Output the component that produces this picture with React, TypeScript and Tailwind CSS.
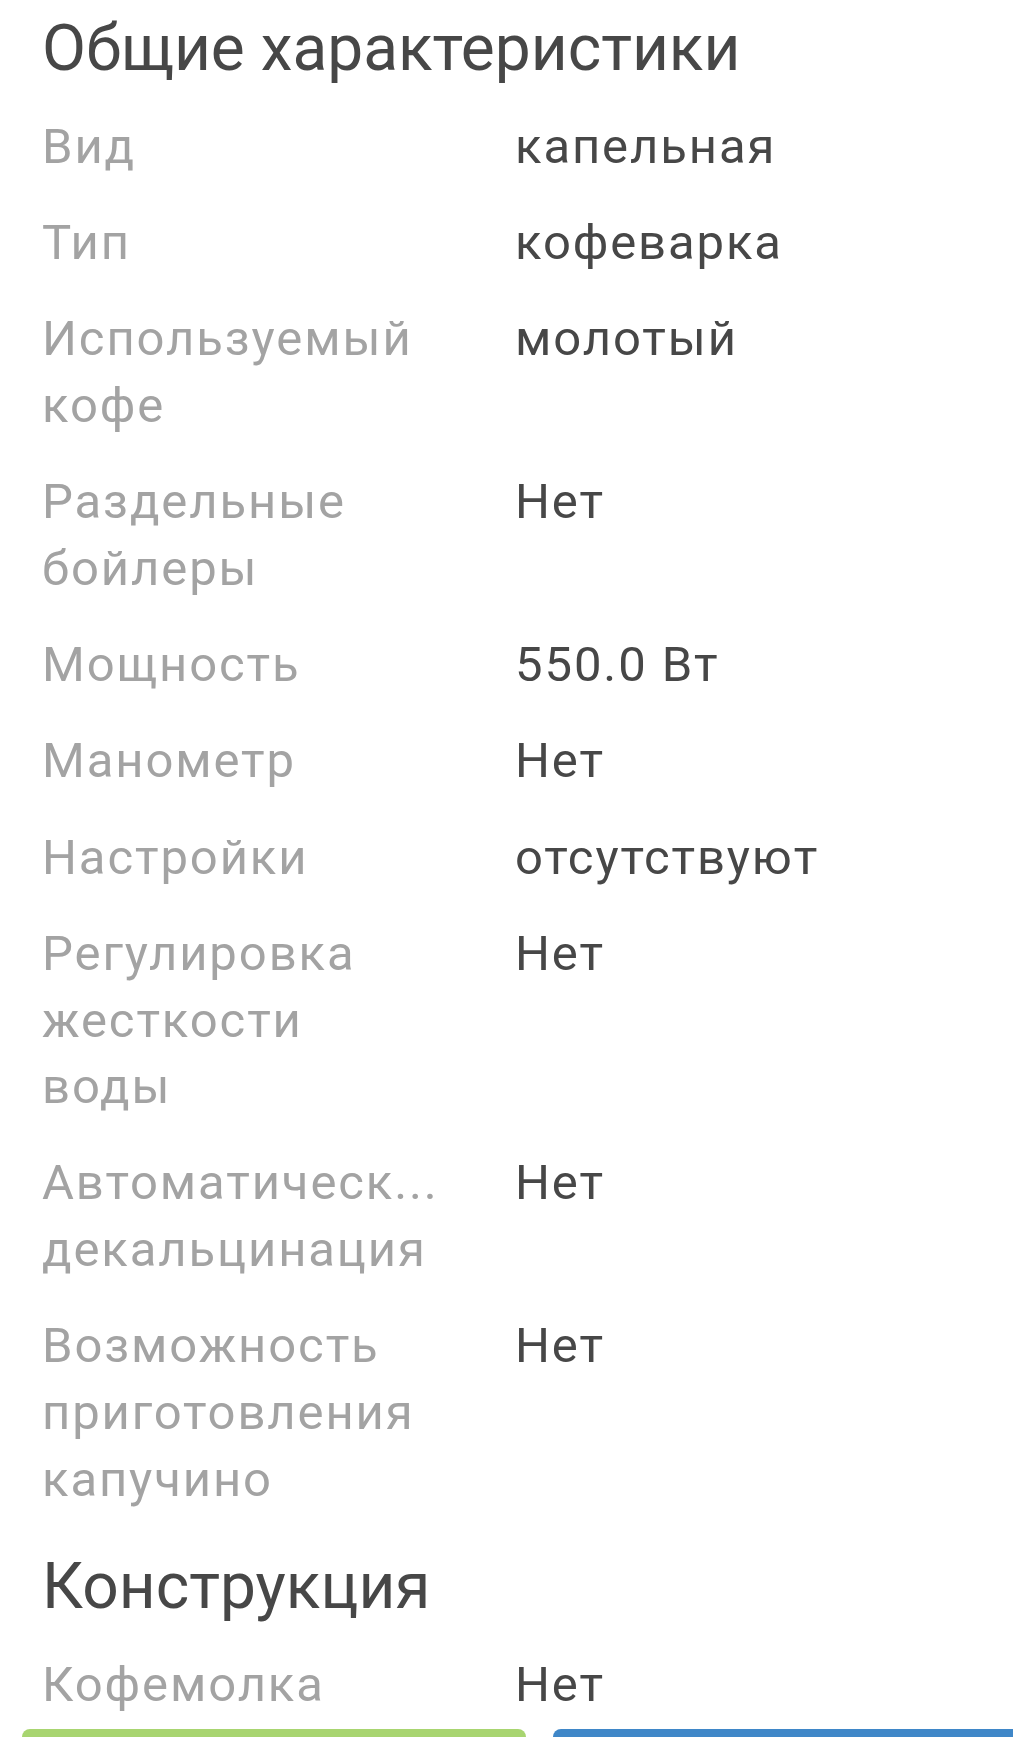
import React from 'react';

interface Spec {
  label: string[];
  value: string;
}

// labels are kept as the lines they wrap to on the device
const general: Spec[] = [
  { label: ['Вид'], value: 'капельная' },
  { label: ['Тип'], value: 'кофеварка' },
  { label: ['Используемый', 'кофе'], value: 'молотый' },
  { label: ['Раздельные', 'бойлеры'], value: 'Нет' },
  { label: ['Мощность'], value: '550.0 Вт' },
  { label: ['Манометр'], value: 'Нет' },
  { label: ['Настройки'], value: 'отсутствуют' },
  { label: ['Регулировка', 'жесткости', 'воды'], value: 'Нет' },
  { label: ['Автоматическ...', 'декальцинация'], value: 'Нет' },
  { label: ['Возможность', 'приготовления', 'капучино'], value: 'Нет' },
];

const construction: Spec[] = [{ label: ['Кофемолка'], value: 'Нет' }];

// one characteristic: grey label on the left, dark value on the right
const SpecRow = ({ label, value }: Spec) => (
  <div className="flex text-[49px] leading-[66.7px] tracking-[1.9px]">
    <div className="w-[410px] mr-[63px] shrink-0 text-[#a3a3a3]">
      {label.map((line) => (
        <div key={line} className="whitespace-nowrap">
          {line}
        </div>
      ))}
    </div>
    <div className="flex-1 text-[#474747]">{value}</div>
  </div>
);

const Section = ({ title, items }: { title: string; items: Spec[] }) => (
  <section>
    <h2 className="text-[64px] leading-[76px] text-[#474747] mb-[27px]">{title}</h2>
    <div className="flex flex-col gap-[29.5px]">
      {items.map((s) => (
        <SpecRow key={s.label.join(' ')} {...s} />
      ))}
    </div>
  </section>
);

export default function App() {
  return (
    <div
      className="w-[1013px] h-[1737px] overflow-hidden bg-white"
      style={{ fontFamily: 'Roboto, "Noto Sans", sans-serif' }}
    >
      <div className="pl-[42px] pt-[11px] flex flex-col gap-[36px]">
        <Section title="Общие характеристики" items={general} />
        <Section title="Конструкция" items={construction} />
      </div>

      {/* action buttons, cut off by the bottom of the screen */}
      <div className="flex gap-[27px] pl-[22px] mt-[10px]">
        <div className="w-[504px] h-[120px] shrink-0 rounded-[8px] bg-[#a8d570]" />
        <div className="w-[504px] h-[120px] shrink-0 rounded-[8px] bg-[#3f87c8]" />
      </div>
    </div>
  );
}
